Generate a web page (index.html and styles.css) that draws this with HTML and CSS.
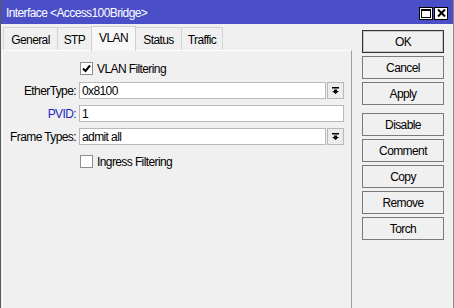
FILE: index.html
```html
<!DOCTYPE html>
<html>
<head>
    <title>Interface</title>
    <link rel="stylesheet" href="styles.css">
</head>
<body>
    <div class="window">
        <div class="titlebar">
            <span class="title">Interface &lt;Access100Bridge&gt;</span>
            <div class="title-buttons">
                <span class="tbtn">
                    <svg width="10" height="9" viewBox="0 0 10 9"><rect x="0.5" y="0.5" width="9" height="8" fill="none" stroke="#000"/><rect x="0" y="0" width="10" height="2" fill="#000"/></svg>
                </span>
                <span class="tbtn">
                    <svg width="9" height="8" viewBox="0 0 9 8"><path d="M1 0.5 L8 7.5 M8 0.5 L1 7.5" stroke="#000" stroke-width="2"/></svg>
                </span>
            </div>
        </div>
        <div class="main">
            <div class="left">
                <div class="tabs">
                    <div class="tab tab-general">General</div>
                    <div class="tab tab-stp">STP</div>
                    <div class="tab tab-vlan active">VLAN</div>
                    <div class="tab tab-status">Status</div>
                    <div class="tab tab-traffic">Traffic</div>
                </div>
                <div class="panel">
                    <div class="row check-row first">
                        <span class="label"></span>
                        <span class="checkbox checked">
                            <svg width="9" height="9" viewBox="0 0 9 9"><path d="M1 4.5 L3.5 7 L8 1.5" fill="none" stroke="#000" stroke-width="2"/></svg>
                        </span>
                        <span class="check-text">VLAN Filtering</span>
                    </div>
                    <div class="row field-row second">
                        <span class="label">EtherType:</span>
                        <span class="input">0x8100</span>
                        <span class="drop">
                            <svg width="7" height="7" viewBox="0 0 7 7"><rect x="0" y="0" width="7" height="1.5" fill="#000"/><polygon points="2,2.5 5,2.5 5,4 7,4 3.5,7 0,4 2,4" fill="#000"/></svg>
                        </span>
                    </div>
                    <div class="row field-row">
                        <span class="label blue">PVID:</span>
                        <span class="input">1</span>
                    </div>
                    <div class="row field-row">
                        <span class="label">Frame Types:</span>
                        <span class="input">admit all</span>
                        <span class="drop">
                            <svg width="7" height="7" viewBox="0 0 7 7"><rect x="0" y="0" width="7" height="1.5" fill="#000"/><polygon points="2,2.5 5,2.5 5,4 7,4 3.5,7 0,4 2,4" fill="#000"/></svg>
                        </span>
                    </div>
                    <div class="row check-row last">
                        <span class="label"></span>
                        <span class="checkbox"></span>
                        <span class="check-text">Ingress Filtering</span>
                    </div>
                </div>
            </div>
            <div class="buttons">
                <div class="btn default">OK</div>
                <div class="btn">Cancel</div>
                <div class="btn">Apply</div>
                <div class="btn group">Disable</div>
                <div class="btn">Comment</div>
                <div class="btn">Copy</div>
                <div class="btn">Remove</div>
                <div class="btn">Torch</div>
            </div>
        </div>
    </div>
</body>
</html>
```

FILE: styles.css
```css
body {
    font-family: "Liberation Sans", Arial, sans-serif;
    font-size: 12px;
    letter-spacing: -0.6px;
    background-color: #f0f0f0;
    margin: 0;
    overflow: hidden;
    color: #000;
    white-space: nowrap;
}
.window {
    width: 454px;
    height: 308px;
    box-sizing: border-box;
    border-left: 1px solid #5a5a5a;
    border-right: 1px solid #8a8a8a;
    display: flex;
    flex-direction: column;
}
.titlebar {
    height: 24px;
    background-color: #4a4fc8;
    color: #fff;
    display: flex;
    align-items: center;
    justify-content: space-between;
    padding: 0 5px 0 5px;
    box-sizing: border-box;
}
.title {
    margin-top: 1px;
}
.title-buttons {
    display: flex;
    gap: 1px;
    margin-top: 2px;
}
.tbtn {
    width: 14px;
    height: 13px;
    background-color: #fff;
    border: 1px solid #000;
    box-sizing: border-box;
    display: flex;
    align-items: center;
    justify-content: center;
}
.main {
    flex: 1;
    display: flex;
}
.left {
    width: 351px;
    display: flex;
    flex-direction: column;
}
.tabs {
    height: 26px;
    display: flex;
    align-items: flex-end;
    padding-left: 2px;
}
.tab {
    height: 23px;
    box-sizing: border-box;
    border: 1px solid #d4d4d4;
    border-bottom: none;
    border-right: none;
    background-color: #f0f0f0;
    display: flex;
    align-items: center;
    justify-content: center;
    padding-top: 1px;
}
.tab-general { width: 54px; }
.tab-stp { width: 34px; }
.tab-vlan { width: 45px; }
.tab-status { width: 45px; }
.tab-traffic { width: 42px; }
.tab:last-child {
    border-right: 1px solid #d4d4d4;
}
.tab.active {
    height: 25px;
    background-color: #f7f7f7;
    padding-top: 0;
    padding-bottom: 3px;
    border-color: #cfcfcf;
    border-right: 1px solid #cfcfcf;
    margin-bottom: -1px;
    position: relative;
    z-index: 1;
}
.tab.active + .tab {
    border-left: none;
}
.panel {
    flex: 1;
    margin-left: 1px;
    border-top: 1px solid #ffffff;
    border-left: 1px solid #ffffff;
    border-right: 1px solid #a0a0a0;
    display: flex;
    flex-direction: column;
    gap: 6px;
    padding-right: 7px;
}
.row {
    display: flex;
    align-items: center;
}
.row.first {
    margin-top: 11px;
}
.row.second {
    margin-top: 1px;
}
.row.last {
    margin-top: 4px;
}
.label {
    width: 73px;
    flex-shrink: 0;
    text-align: right;
    margin-right: 3px;
}
.label.blue {
    color: #2626c6;
}
.check-row {
    height: 13px;
}
.checkbox {
    width: 13px;
    height: 13px;
    box-sizing: border-box;
    border: 1px solid #8e8f8f;
    background-color: #fff;
    display: flex;
    align-items: center;
    justify-content: center;
    margin-left: 1px;
}
.check-text {
    margin-left: 4px;
}
.field-row {
    height: 17px;
}
.input {
    flex: 1;
    height: 17px;
    box-sizing: border-box;
    border: 1px solid #b9b9b9;
    background-color: #fff;
    display: flex;
    align-items: center;
    padding-left: 2px;
}
.drop {
    width: 17px;
    height: 17px;
    box-sizing: border-box;
    border: 1px solid #b9b9b9;
    background-color: #ececec;
    margin-left: 1px;
    display: flex;
    align-items: center;
    justify-content: center;
}
.buttons {
    flex: 1;
    display: flex;
    flex-direction: column;
    gap: 3px;
    padding: 6px 0 0 10px;
}
.btn {
    width: 82px;
    height: 23px;
    box-sizing: border-box;
    border: 1px solid #7a7a7a;
    background-color: #f0f0f0;
    display: flex;
    align-items: center;
    justify-content: center;
}
.btn.default {
    border-color: #333;
    box-shadow: inset 0 0 0 1px #c8c8c8;
}
.btn.group {
    margin-top: 5px;
}
```
